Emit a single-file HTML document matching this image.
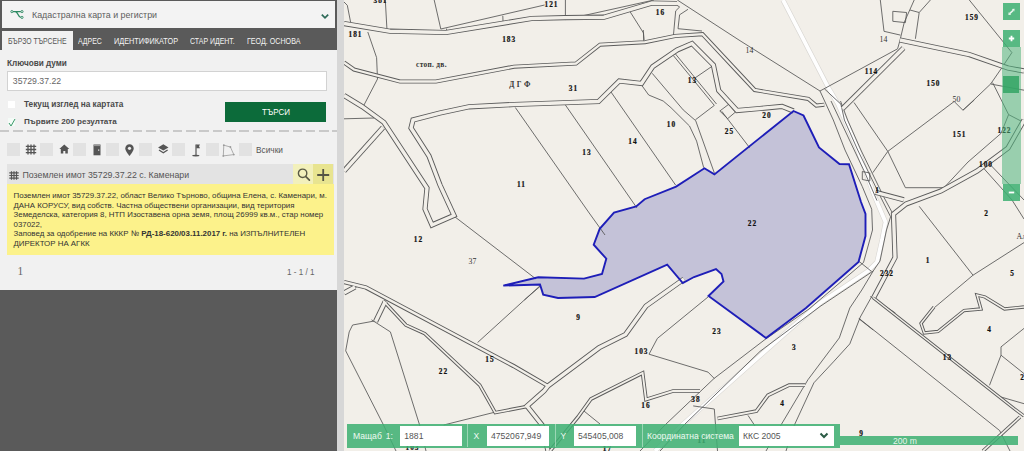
<!DOCTYPE html>
<html><head><meta charset="utf-8">
<style>
*{margin:0;padding:0;box-sizing:border-box}
html,body{width:1024px;height:451px;overflow:hidden;background:#f2efe9;font-family:"Liberation Sans",sans-serif}
.abs{position:absolute}
#panel{position:absolute;left:0;top:0;width:337px;height:451px;background:#5a5a5a}
#light{position:absolute;left:0;top:50px;width:337px;height:240px;background:#f1f1f1}
#hdr{position:absolute;left:2px;top:1px;width:333px;height:27px;background:#f3f3f3}
.tx{position:absolute;line-height:1;white-space:nowrap;transform-origin:0 0}
.tab{top:36.8px;font-size:8.7px;color:#f4f4f4}
#acttab{position:absolute;left:2px;top:31px;width:71px;height:19px;background:#f1f1f1}
#divbar{position:absolute;left:337px;top:0;width:7px;height:451px;background:#d7d7d7}
.lbl{font-weight:bold;color:#4a4a4a}
#inp{position:absolute;left:7px;top:71px;width:320px;height:20px;background:#fff;border:1px solid #d2d2d2}
.cb{position:absolute;left:7.8px;width:7.4px;height:7.5px;background:#fff}
#btn{position:absolute;left:225px;top:102px;width:101px;height:20px;background:#0c6b3a}
#dash{position:absolute;left:0;top:130px;width:337px;height:2px;background:repeating-linear-gradient(90deg,#c9c9c9 0 9.5px,transparent 9.5px 13.3px)}
.sq{position:absolute;top:143px;width:13px;height:13px;background:#e2e2e2}
#rh{position:absolute;left:7px;top:164.3px;width:326.5px;height:20px;background:#e3e3e3}
#mag{position:absolute;left:293.3px;top:164.3px;width:20px;height:20px;background:#f2f0bb}
#plus{position:absolute;left:313.3px;top:164.3px;width:20.2px;height:20px;background:#e8e490}
#yb{position:absolute;left:7px;top:184.3px;width:326.5px;height:70.7px;background:#fcf28b}
</style></head>
<body>
<div id="panel">
  <div id="hdr">
    <svg class="abs" style="left:7.7px;top:8px" width="15" height="11" viewBox="0 0 15 11"><path d="M3 2.6H10.8M5.2 2.6C8.3 2.6 7.8 8.4 10.8 8.4" fill="none" stroke="#2d8a62" stroke-width="1.3"/><circle cx="1.9" cy="2.6" r="1.1" fill="none" stroke="#2d8a62" stroke-width="0.9"/><circle cx="12" cy="2.6" r="1.1" fill="none" stroke="#2d8a62" stroke-width="0.9"/><circle cx="12" cy="8.4" r="1.1" fill="none" stroke="#2d8a62" stroke-width="0.9"/></svg>
    <svg class="abs" style="left:318px;top:12px" width="10" height="7" viewBox="0 0 10 7"><path d="M1.8 1.6 L5 4.8 L8.2 1.6" fill="none" stroke="#2d6a58" stroke-width="1.7"/></svg>
  </div>
  <div class="tx" style="left:32px;top:11.2px;font-size:8.9px;color:#5e5e5e">Кадастрална карта и регистри</div>
  <div id="light"></div>
  <div id="acttab"></div>
  <div class="tx tab" style="left:8px;color:#555;transform:scaleX(.79)">БЪРЗО ТЪРСЕНЕ</div>
  <div class="tx tab" style="left:78px;transform:scaleX(.80)">АДРЕС</div>
  <div class="tx tab" style="left:114px;transform:scaleX(.84)">ИДЕНТИФИКАТОР</div>
  <div class="tx tab" style="left:190px;transform:scaleX(.80)">СТАР ИДЕНТ.</div>
  <div class="tx tab" style="left:247px;transform:scaleX(.82)">ГЕОД. ОСНОВА</div>

  <div class="tx lbl" style="left:7px;top:59.8px;font-size:8.2px">Ключови думи</div>
  <div id="inp"></div>
  <div class="tx" style="left:12.8px;top:76.6px;font-size:8.7px;color:#666">35729.37.22</div>
  <div class="cb" style="top:100.8px"></div>
  <div class="tx lbl" style="left:24px;top:100.6px;font-size:8.24px">Текущ изглед на картата</div>
  <div class="cb" style="top:118.2px;background:#f4fbf7"></div>
  <svg class="abs" style="left:8px;top:118px" width="8" height="9" viewBox="0 0 8 9"><path d="M1 5 L3 8 L7 1" fill="none" stroke="#3a9a6a" stroke-width="1"/></svg>
  <div class="tx lbl" style="left:24px;top:117.5px;font-size:8.1px">Първите 200 резултата</div>
  <div id="btn"></div>
  <div class="tx" style="left:261.6px;top:108.1px;font-size:8.7px;color:#fff;transform:scaleX(.92)">ТЪРСИ</div>
  <div id="dash"></div>

  <div class="sq" style="left:7px"></div>
  <div class="sq" style="left:40px"></div>
  <div class="sq" style="left:73px"></div>
  <div class="sq" style="left:106px"></div>
  <div class="sq" style="left:139px"></div>
  <div class="sq" style="left:172px"></div>
  <div class="sq" style="left:205.5px"></div>
  <div class="sq" style="left:238.5px"></div>
  <svg class="abs" style="left:25px;top:144px" width="12" height="11" viewBox="0 0 12 11"><path d="M3 0.5V10.5M6 0.5V10.5M9 0.5V10.5M0.8 2.3H11.2M0.8 5.5H11.2M0.8 8.7H11.2" stroke="#555" stroke-width="1.3"/></svg>
  <svg class="abs" style="left:59px;top:144px" width="11" height="10" viewBox="0 0 11 10"><path d="M0.3 5 L5.3 0.6 L10.3 5 L8.8 5 L8.8 9.6 L6.3 9.6 L6.3 7 L4.3 7 L4.3 9.6 L1.8 9.6 L1.8 5Z" fill="#555"/></svg>
  <svg class="abs" style="left:93px;top:143.5px" width="8" height="12" viewBox="0 0 8 12"><path d="M0.5 0.5H7.5V11.3H0.5Z" fill="#555"/><path d="M1 1.6H7" stroke="#e8e8e8" stroke-width="0.5"/><rect x="5" y="5.5" width="1.3" height="1.2" fill="#e8e8e8"/></svg>
  <svg class="abs" style="left:125px;top:143.5px" width="9" height="12" viewBox="0 0 9 12"><path d="M4.5 0.3C2 0.3 0.3 2.1 0.3 4.4C0.3 7.2 4.5 11.9 4.5 11.9C4.5 11.9 8.7 7.2 8.7 4.4C8.7 2.1 7 0.3 4.5 0.3Z" fill="#555"/><circle cx="4.5" cy="4.3" r="1.6" fill="#f0f0f0"/></svg>
  <svg class="abs" style="left:158px;top:144px" width="11" height="11" viewBox="0 0 11 11"><path d="M5.3 0.3L10.5 3.4L5.3 6.5L0.1 3.4Z" fill="#555"/><path d="M1 6L5.3 8.8L9.6 6" fill="none" stroke="#555" stroke-width="1.3"/></svg>
  <svg class="abs" style="left:192px;top:143.5px" width="9" height="13" viewBox="0 0 9 13"><path d="M4 0.5V11.5" stroke="#555" stroke-width="1.2"/><path d="M4.3 0.5H8L7 2.3L8 4.3H4.3Z" fill="#555"/><ellipse cx="3.8" cy="11.6" rx="3.6" ry="0.9" fill="#555"/></svg>
  <svg class="abs" style="left:222px;top:144px" width="13" height="13" viewBox="0 0 13 13"><path d="M1.8 1.2L8.4 3L11.8 10.6L1.3 11.9Z" fill="none" stroke="#9a9a9a" stroke-width="0.8"/><circle cx="1.8" cy="1.2" r="0.9" fill="#9a9a9a"/><circle cx="8.4" cy="3" r="0.9" fill="#9a9a9a"/><circle cx="11.8" cy="10.6" r="0.9" fill="#9a9a9a"/><circle cx="1.3" cy="11.9" r="0.9" fill="#9a9a9a"/></svg>
  <div class="tx" style="left:256px;top:146px;font-size:8.3px;color:#555">Всички</div>

  <div id="rh"></div>
  <div class="tx" style="left:22.5px;top:170.8px;font-size:8.8px;color:#555">Поземлен имот 35729.37.22 с. Каменари</div>
  <div id="mag"></div><div id="plus"></div>
  <svg class="abs" style="left:8.5px;top:170.5px" width="10" height="9" viewBox="0 0 10 9"><path d="M2.5 0.2V8.8M5 0.2V8.8M7.5 0.2V8.8M0.3 1.8H9.7M0.3 4.5H9.7M0.3 7.2H9.7" stroke="#555" stroke-width="1.2"/></svg>
  <svg class="abs" style="left:296px;top:167px" width="16" height="16" viewBox="0 0 16 16"><circle cx="6.6" cy="6.3" r="4.2" fill="none" stroke="#5a5a45" stroke-width="1.4"/><path d="M9.6 9.4L13.4 13.2" stroke="#5a5a45" stroke-width="1.7" stroke-linecap="round"/></svg>
  <svg class="abs" style="left:316px;top:168px" width="14" height="14" viewBox="0 0 14 14"><path d="M7.2 1V13M1.2 7H13.2" stroke="#555545" stroke-width="1.8"/></svg>
  <div id="yb"></div>
  <div class="abs" style="left:13.5px;top:191.2px;width:318px;font-size:7.9px;line-height:9.55px;color:#333;white-space:nowrap">Поземлен имот 35729.37.22, област Велико Търново, община Елена, с. Каменари, м.<br>ДАНА КОРУСУ, вид собств. Частна обществени организации, вид територия<br>Земеделска, категория 8, НТП Изоставена орна земя, площ 26999 кв.м., стар номер<br>037022,<br>Заповед за одобрение на КККР № <b>РД-18-620/03.11.2017 г.</b> на ИЗПЪЛНИТЕЛЕН<br>ДИРЕКТОР НА АГКК</div>
  <div class="tx" style="left:17.5px;top:266.4px;font-size:11.5px;color:#666;font-family:'Liberation Serif',serif">1</div>
  <div class="tx" style="left:287px;top:267.7px;font-size:8.9px;color:#666;transform:scaleX(.91)">1 - 1 / 1</div>
</div>
<div id="divbar"></div>
<svg style="position:absolute;left:344px;top:0" width="680" height="451" viewBox="344 0 680 451">
<rect x="344" y="0" width="680" height="451" fill="#f2efe9"/>
<polygon points="793.5,111 803.5,115.5 819,147.5 839.5,164 849,164.3 861,202 865.5,214 865.5,236 858.5,262 806,308 766,338 708.5,296 723.5,281.5 721.5,274 716,269 694,277 682.8,283 667.2,264.7 594.7,297 558,298 543.2,294.6 540,284.5 503.3,285.6 538.2,277.3 584,278.6 602,274 606.3,258.7 593.7,244.7 599.7,228.8 614,212.5 636.2,206.5 644.6,199.2 676.1,186.6 704.4,168.3 714.4,174.4" fill="#c4c2d8" stroke="none"/>
<g fill="none" stroke="#d8d6d2" stroke-width="5" stroke-linejoin="round">
<polyline points="783,0 828,87 838,104 858,150 873.6,194 885.5,222 882,240 877,262 868,271 820,303 789,330 682,425 655,451"/>
</g>
<g fill="none" stroke="#fefefe" stroke-width="3.8" stroke-linejoin="round">
<polyline points="783,0 828,87 838,104 858,150 873.6,194 885.5,222 882,240 877,262 868,271 820,303 789,330 682,425 655,451"/>
</g>
<g fill="none" stroke="#555" stroke-width="0.85" stroke-linejoin="miter">
<polyline points="344,2 347.3,5.3 350.7,22.6"/>
<polyline points="385.3,0 386.9,28.6"/>
<polyline points="434.2,0 440.8,29"/>
<polyline points="440.8,29 544.6,5"/>
<polyline points="502.8,15.8 503.1,23.3"/>
<polyline points="446.6,28.6 446.6,31.2"/>
<polyline points="565.4,0 565.4,19.6"/>
<polyline points="565.4,19.6 654,0"/>
<polyline points="367.8,32 376.6,57.6 377.5,79 364,105"/>
<polyline points="344,118.8 374,118"/>
<polyline points="629,10 643.5,33 644,40"/>
<polyline points="640,4.7 654,1.6 672.6,2.3 679.6,7 675.7,10.9 673.4,35.7"/>
<polyline points="688,9.3 679.6,14.8 678,28.7 702,31"/>
<polyline points="643.3,30 643.8,41.1"/>
<polyline points="677.3,0 740,40.7 820,91 897.6,48.8 899.8,41 904.3,22.2 914.2,0"/>
<polyline points="515.3,107.5 589.2,213 605,235"/>
<polyline points="565.4,105 636.8,207.8"/>
<polyline points="611,92 675.7,185.2"/>
<polyline points="673.3,55.5 714.3,105.4"/>
<polyline points="675.5,54 716.5,104"/>
<polyline points="695.4,77.7 713.2,65.5"/>
<polyline points="695.4,119.8 714.3,105.4"/>
<polyline points="652.2,73.3 683.2,109.9 695.7,120.7 714.4,173.1"/>
<polyline points="641,84.3 648.7,95 663.2,101 671,107.7 689.5,126 696.6,141.1 703.7,167.7"/>
<polyline points="719.8,111 728.7,104.3 735.4,112.1 727.6,118.7 719.8,111"/>
<polyline points="721.7,111.2 749.7,147.8"/>
<polyline points="892.8,11.3 906.6,12.5 905.4,22.6 892.8,21.3 892.8,11.3"/>
<polyline points="880.3,0 884,31.3 900.4,35.1"/>
<polyline points="930.4,0 919.2,12.5 915.4,38.8"/>
<polyline points="910,10 919.2,12.5"/>
<polyline points="969.3,0 1011.9,52.6 1004.4,63.9"/>
<polyline points="1001.9,67.7 990.6,84 963,110.3 954.2,101.5 887.8,151.4 872.8,172.7"/>
<polyline points="990.6,84 1024,90.2"/>
<polyline points="992.6,82.6 1008.6,114.6 1001,133.4 968,162 944,187.7"/>
<polyline points="1008.6,114.6 1024,122.6"/>
<polyline points="963,110 974.3,100"/>
<polyline points="854,102.5 887.8,151.4 905.4,187.7 945.5,187.7"/>
<polyline points="984.3,169 1012,200 1024,219"/>
<polyline points="990.6,165 1024,200"/>
<polyline points="919.2,206.3 973,275.2 1024,242.6"/>
<polyline points="973,275.2 934.2,307.8"/>
<polyline points="1001,346.9 1024,328.4"/>
<polyline points="1001,346.9 1001,355.2 989.5,385.3"/>
<polyline points="1001,355.2 1024,373.6"/>
<polyline points="1001,397 1024,403.7"/>
<polyline points="859,318.4 999.6,430.5 1010,451"/>
<polyline points="858.8,318.7 873.2,330"/>
<polyline points="873.2,271 861.8,290 849.8,308 839.3,337.9 807.9,379.8 781,425 766,451"/>
<polyline points="872,296 860.3,317 849.8,343.9 833.4,361.9 813.9,382.8 794.4,425 786,451"/>
<polyline points="820,91 833.3,120 845,150 862.3,186.6 871.7,209.2 872.5,230 863.5,262.5 809,309 765,339.5 714,378.5 665,425 640,451"/>
<polyline points="824.4,88.8 841,104.3 844.4,120 857.7,150 881.1,198 890.6,216.8 886.5,230 880,261 873.2,271 820,306.5 760,351.4 684,425 660,451"/>
<polyline points="862.3,171.5 869.8,173 869.8,181 862.3,179.5 862.3,171.5"/>
<polyline points="859,261.4 871.5,271.4"/>
<polyline points="870.3,296.5 895.4,313"/>
<polyline points="831,101 864.6,172 877,200.6"/>
<polyline points="840.5,101 847.6,120 860.9,150 884.3,198 893,214"/>
<polyline points="649,354.2 657.4,338.4 708,297"/>
<polyline points="649,354.2 708,372.1 714.3,378.5"/>
<polyline points="693.2,405.9 714.3,409 717.5,451"/>
<polyline points="748,415.4 761,435"/>
<polyline points="477.6,342.5 540.1,285.7"/>
<polyline points="375,320.9 352.6,325 349.2,331.9 345.7,350.8 383.5,425 396,451"/>
<polyline points="371.5,319.8 390.4,331.9 419.6,425 426,451"/>
<polyline points="443.7,425 500,410.9"/>
<polyline points="454.3,216.4 536,279"/>
<polyline points="524.4,300 540.2,286.3"/>
<polyline points="583.7,410.8 600,424"/>
<polyline points="344,291.9 358,286.3"/>
</g>
<g fill="none" stroke="#5a5a5a" stroke-linejoin="miter" stroke-miterlimit="3">
<polyline stroke-width="5.2" points="344,23.5 390,31.2 446,32.5 531.5,18.5 565,17.6 604,17.2 652,3 677,3.5"/>
<polyline stroke-width="4.1" points="344,62.5 354,69.5 400,81.5 436,81.5 514,66.7 576,63.5 600,44.7 645,42.2 675,36 702.5,34.2 736,70 754.7,90 808.3,98.9 816.3,105.6 824.3,104.7"/>
<polyline stroke-width="5.2" points="344,95.5 362,106.5 384,122.5 427,188 425,209 432,225 454,215.5 440,185 429,156 411,128 413,120 440,113 469,106.8 514,104.5 598.5,101.5 619.3,81 641.5,83.5 652.7,66.6 677,50 692,43.5 713.4,65 718.7,90.5 737,110.5 760,108.5 782,106.4 793.5,111"/>
<polyline stroke-width="5.2" points="344,171 383,127.5"/>
<polyline stroke-width="5.2" points="900,40 969,54.5 1008,68 1024,71"/>
<polyline stroke-width="5.2" points="842.5,108.7 903.5,48"/>
<polyline stroke-width="5.2" points="1024,120 1008,148 977,171 941,191 906,204 893.5,214 895,257.5 874,297"/>
<polyline stroke-width="3.3" points="873,297.5 1014,408.5 1024,416"/>
<polyline stroke-width="5.2" points="875.5,192.3 903.8,199.8"/>
<polyline stroke-width="3.3" points="934,307 921,323.4 924.3,333 938,331.5 964,310.5 981,309 977,295 985,297 1004.5,309 1024,307"/>
<polyline stroke-width="3.5" points="1020,417 983,451"/>
<polyline stroke-width="4.3" points="344,282 366,287.5 513.5,366 548,386"/>
<polyline stroke-width="5.2" points="684,279 646,306 625.5,334.5 599,347.8 548,386 544,391 527,406 542,425 548,451"/>
<polyline stroke-width="5.2" points="344,293 355,287"/>
<polyline stroke-width="5.2" points="385.2,301.6 375.6,321.5"/>
<polyline stroke-width="3.5" points="383.5,301 405.9,325 424.8,333.6 479.7,385.1 495.2,412.6 527,406.5"/>
<polyline stroke-width="3.7" points="700,391 673,391 646,399.5 642.6,373 591,399 578,417 550,451"/>
<polyline stroke-width="3.7" points="717.5,418.5 756.4,411.1 768,395.3 789.1,385.2 805,385.2"/>
</g>
<g fill="none" stroke="#f2efe9" stroke-linejoin="miter" stroke-miterlimit="3">
<polyline stroke-width="3.4" points="344,23.5 390,31.2 446,32.5 531.5,18.5 565,17.6 604,17.2 652,3 677,3.5"/>
<polyline stroke-width="2.3" points="344,62.5 354,69.5 400,81.5 436,81.5 514,66.7 576,63.5 600,44.7 645,42.2 675,36 702.5,34.2 736,70 754.7,90 808.3,98.9 816.3,105.6 824.3,104.7"/>
<polyline stroke-width="3.4" points="344,95.5 362,106.5 384,122.5 427,188 425,209 432,225 454,215.5 440,185 429,156 411,128 413,120 440,113 469,106.8 514,104.5 598.5,101.5 619.3,81 641.5,83.5 652.7,66.6 677,50 692,43.5 713.4,65 718.7,90.5 737,110.5 760,108.5 782,106.4 793.5,111"/>
<polyline stroke-width="3.4" points="344,171 383,127.5"/>
<polyline stroke-width="3.4" points="900,40 969,54.5 1008,68 1024,71"/>
<polyline stroke-width="3.4" points="842.5,108.7 903.5,48"/>
<polyline stroke-width="3.4" points="1024,120 1008,148 977,171 941,191 906,204 893.5,214 895,257.5 874,297"/>
<polyline stroke-width="1.5" points="873,297.5 1014,408.5 1024,416"/>
<polyline stroke-width="3.4" points="875.5,192.3 903.8,199.8"/>
<polyline stroke-width="1.5" points="934,307 921,323.4 924.3,333 938,331.5 964,310.5 981,309 977,295 985,297 1004.5,309 1024,307"/>
<polyline stroke-width="1.7" points="1020,417 983,451"/>
<polyline stroke-width="2.5" points="344,282 366,287.5 513.5,366 548,386"/>
<polyline stroke-width="3.4" points="684,279 646,306 625.5,334.5 599,347.8 548,386 544,391 527,406 542,425 548,451"/>
<polyline stroke-width="3.4" points="344,293 355,287"/>
<polyline stroke-width="3.4" points="385.2,301.6 375.6,321.5"/>
<polyline stroke-width="1.7" points="383.5,301 405.9,325 424.8,333.6 479.7,385.1 495.2,412.6 527,406.5"/>
<polyline stroke-width="1.9" points="700,391 673,391 646,399.5 642.6,373 591,399 578,417 550,451"/>
<polyline stroke-width="1.9" points="717.5,418.5 756.4,411.1 768,395.3 789.1,385.2 805,385.2"/>
</g>
<polygon points="793.5,111 803.5,115.5 819,147.5 839.5,164 849,164.3 861,202 865.5,214 865.5,236 858.5,262 806,308 766,338 708.5,296 723.5,281.5 721.5,274 716,269 694,277 682.8,283 667.2,264.7 594.7,297 558,298 543.2,294.6 540,284.5 503.3,285.6 538.2,277.3 584,278.6 602,274 606.3,258.7 593.7,244.7 599.7,228.8 614,212.5 636.2,206.5 644.6,199.2 676.1,186.6 704.4,168.3 714.4,174.4" fill="none" stroke="#1e1eb8" stroke-width="1.9" stroke-linejoin="miter"/>
<g font-family="Liberation Serif" font-size="7.3" fill="#111" letter-spacing="0.95" text-anchor="middle">
<text x="380.45" y="2.6" font-weight="bold" stroke="#111" stroke-width="0.2">381</text>
<text x="355.45" y="36.6" font-weight="bold" stroke="#111" stroke-width="0.2">181</text>
<text x="509.15" y="41.5" font-weight="bold" stroke="#111" stroke-width="0.2">183</text>
<text x="551.45" y="6.6" font-weight="bold" stroke="#111" stroke-width="0.2">121</text>
<text x="431.45" y="66.6" font-weight="bold" letter-spacing="0.3" font-size="7.4" fill="#333">стоп. дв.</text>
<text x="519.95" y="86.6" font-weight="bold" letter-spacing="0.3" font-size="7.4" fill="#333">Д Г Ф</text>
<text x="573.45" y="91.1" font-weight="bold" stroke="#111" stroke-width="0.2">31</text>
<text x="660.45" y="14.6" font-weight="bold" stroke="#111" stroke-width="0.2">16</text>
<text x="692.45" y="82.6" font-weight="bold" stroke="#111" stroke-width="0.2">13</text>
<text x="749.45" y="52.6" letter-spacing="0.15" font-size="7.8" fill="#333">14</text>
<text x="671.45" y="126.6" font-weight="bold" stroke="#111" stroke-width="0.2">10</text>
<text x="729.45" y="133.6" font-weight="bold" stroke="#111" stroke-width="0.2">25</text>
<text x="766.95" y="117.6" font-weight="bold" stroke="#111" stroke-width="0.2">20</text>
<text x="871.45" y="74.1" font-weight="bold" stroke="#111" stroke-width="0.2">114</text>
<text x="883.45" y="42.1" letter-spacing="0.15" font-size="7.8" fill="#333">14</text>
<text x="971.95" y="20.1" font-weight="bold" stroke="#111" stroke-width="0.2">159</text>
<text x="933.45" y="85.6" font-weight="bold" stroke="#111" stroke-width="0.2">150</text>
<text x="956.45" y="101.6" letter-spacing="0.15" font-size="7.8" fill="#333">50</text>
<text x="959.45" y="137.1" font-weight="bold" stroke="#111" stroke-width="0.2">151</text>
<text x="1004.45" y="133.1" font-weight="bold" stroke="#111" stroke-width="0.2">122</text>
<text x="985.95" y="167.1" font-weight="bold" stroke="#111" stroke-width="0.2">100</text>
<text x="877.45" y="192.6" font-weight="bold" stroke="#111" stroke-width="0.2">1</text>
<text x="986.45" y="216.1" font-weight="bold" stroke="#111" stroke-width="0.2">2</text>
<text x="1021.45" y="238.6" letter-spacing="0.15" font-size="7.8" fill="#333">Ал</text>
<text x="927.95" y="263.1" font-weight="bold" stroke="#111" stroke-width="0.2">1</text>
<text x="886.95" y="276.1" font-weight="bold" stroke="#111" stroke-width="0.2">232</text>
<text x="1012.45" y="275.6" font-weight="bold" stroke="#111" stroke-width="0.2">5</text>
<text x="989.45" y="331.6" font-weight="bold" stroke="#111" stroke-width="0.2">4</text>
<text x="947.45" y="359.6" font-weight="bold" stroke="#111" stroke-width="0.2">13</text>
<text x="1022.45" y="379.6" font-weight="bold" stroke="#111" stroke-width="0.2">2</text>
<text x="861.45" y="435.6" font-weight="bold" stroke="#111" stroke-width="0.2">9</text>
<text x="521.45" y="187.1" font-weight="bold" stroke="#111" stroke-width="0.2">11</text>
<text x="586.95" y="155.1" font-weight="bold" stroke="#111" stroke-width="0.2">13</text>
<text x="632.95" y="143.6" font-weight="bold" stroke="#111" stroke-width="0.2">14</text>
<text x="752.45" y="225.6" font-weight="bold" stroke="#111" stroke-width="0.2">22</text>
<text x="418.45" y="242.1" font-weight="bold" stroke="#111" stroke-width="0.2">12</text>
<text x="472.45" y="263.6" letter-spacing="0.15" font-size="7.8" fill="#333">37</text>
<text x="443.45" y="373.6" font-weight="bold" stroke="#111" stroke-width="0.2">22</text>
<text x="489.95" y="361.6" font-weight="bold" stroke="#111" stroke-width="0.2">15</text>
<text x="578.45" y="319.6" font-weight="bold" stroke="#111" stroke-width="0.2">9</text>
<text x="641.45" y="354.1" font-weight="bold" stroke="#111" stroke-width="0.2">103</text>
<text x="645.95" y="408.1" font-weight="bold" stroke="#111" stroke-width="0.2">16</text>
<text x="695.95" y="402.1" font-weight="bold" stroke="#111" stroke-width="0.2">38</text>
<text x="716.95" y="334.1" font-weight="bold" stroke="#111" stroke-width="0.2">23</text>
<text x="794.25" y="350.1" font-weight="bold" stroke="#111" stroke-width="0.2">3</text>
<text x="782.45" y="405.6" font-weight="bold" stroke="#111" stroke-width="0.2">4</text>
<text x="701.85" y="442.6" font-weight="bold" stroke="#111" stroke-width="0.2">11</text>
<text x="412.45" y="450.1" font-weight="bold" stroke="#111" stroke-width="0.2">103</text>
<text x="607.45" y="451.1" font-weight="bold" stroke="#111" stroke-width="0.2">17</text>
</g>
</svg>
<div class="abs" style="left:1003px;top:3px;width:17px;height:17px;background:rgba(62,176,114,.86)"></div>
<svg class="abs" style="left:1003px;top:3px" width="17" height="17" viewBox="0 0 17 17"><path d="M6.6 10.6 L10.2 7.4" stroke="#eaf6ef" stroke-width="1.5"/><path d="M5.4 12 L5.6 9.2 L8.2 11.8Z M11.6 5.7 L8.8 6 L11.3 8.5Z" fill="#eaf6ef"/></svg>
<div class="abs" style="left:1002px;top:46.5px;width:18.7px;height:137.5px;background:rgba(80,180,125,.55)"></div>
<div class="abs" style="left:1003px;top:30px;width:17px;height:16.6px;background:rgba(62,176,114,.86)"></div>
<svg class="abs" style="left:1003px;top:30px" width="17" height="17" viewBox="0 0 17 17"><path d="M8.5 5.8 V11.2 M5.8 8.5 H11.2" stroke="#fff" stroke-width="1.8"/></svg>
<div class="abs" style="left:1003.2px;top:76px;width:16.3px;height:16.5px;background:rgba(50,165,100,.85)"></div>
<div class="abs" style="left:1003px;top:184px;width:17px;height:17px;background:rgba(62,176,114,.86)"></div>
<svg class="abs" style="left:1003px;top:184px" width="17" height="17" viewBox="0 0 17 17"><path d="M5.8 8.5 H11.2" stroke="#fff" stroke-width="1.8"/></svg>

<div class="abs" style="left:347px;top:424px;width:493px;height:23.5px;background:rgba(62,176,114,.86)"></div>
<div class="abs" style="left:467px;top:424px;width:1px;height:23px;background:rgba(200,235,215,.6)"></div>
<div class="abs" style="left:554.5px;top:424px;width:1px;height:23px;background:rgba(200,235,215,.6)"></div>
<div class="abs" style="left:641.5px;top:424px;width:1px;height:23px;background:rgba(200,235,215,.6)"></div>
<div class="tx" style="left:353px;top:431.5px;font-size:8.6px;color:#eefaf2">Мащаб</div>
<div class="tx" style="left:385.8px;top:431.5px;font-size:8.6px;color:#eefaf2">1:</div>
<div class="abs" style="left:400px;top:426px;width:62px;height:20px;background:#fff"></div>
<div class="tx" style="left:404.3px;top:431.5px;font-size:8.6px;color:#555">1881</div>
<div class="tx" style="left:473.5px;top:431.5px;font-size:8.6px;color:#eefaf2">X</div>
<div class="abs" style="left:487px;top:426px;width:62px;height:20px;background:#fff"></div>
<div class="tx" style="left:491px;top:431.5px;font-size:8.6px;color:#555">4752067,949</div>
<div class="tx" style="left:560.5px;top:431.5px;font-size:8.6px;color:#eefaf2">Y</div>
<div class="abs" style="left:573.7px;top:426px;width:62px;height:20px;background:#fff"></div>
<div class="tx" style="left:578px;top:431.5px;font-size:8.6px;color:#555">545405,008</div>
<div class="tx" style="left:647px;top:431.5px;font-size:8.6px;color:#eefaf2">Координатна система</div>
<div class="abs" style="left:738.6px;top:426px;width:95.7px;height:20px;background:#fff"></div>
<div class="tx" style="left:743px;top:431.5px;font-size:8.6px;color:#555">ККС 2005</div>
<svg class="abs" style="left:819px;top:432px" width="10" height="7" viewBox="0 0 10 7"><path d="M1.5 1.5 L5 5 L8.5 1.5" fill="none" stroke="#2b5b45" stroke-width="2"/></svg>
<div class="abs" style="left:840px;top:436px;width:178px;height:9px;background:rgba(62,176,114,.86)"></div>
<div class="tx" style="left:893px;top:436.5px;font-size:8.6px;color:#e6f5ec">200 m</div>

</body></html>
